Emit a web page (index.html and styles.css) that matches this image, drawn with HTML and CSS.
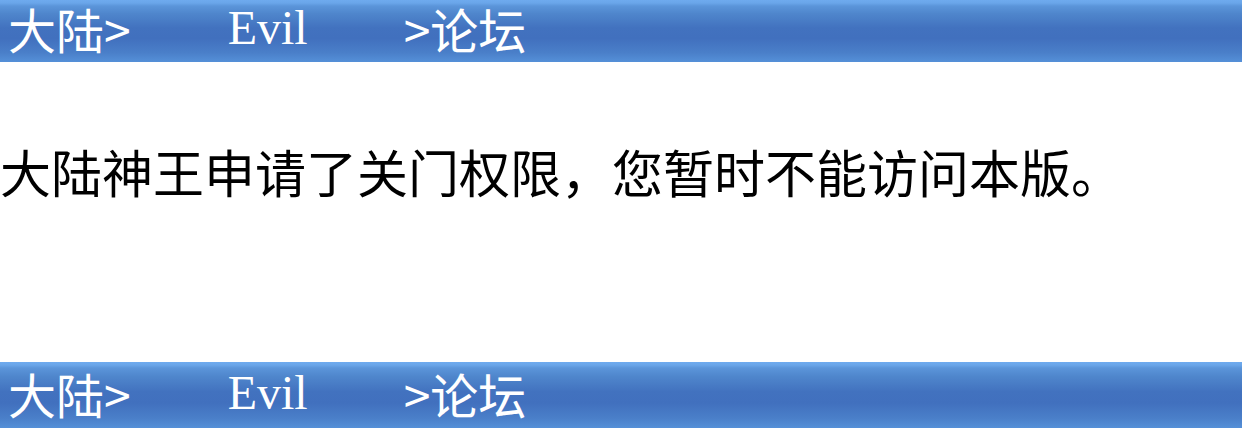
FILE: index.html
```html
<!DOCTYPE html>
<html lang="zh-CN">
<head>
<meta charset="utf-8">
<title>论坛</title>
<link rel="stylesheet" href="styles.css">
</head>
<body>
<div class="bar bar-top">
  <span class="crumb">大陆&gt;</span>
  <span class="crumb crumb-name">Evil</span>
  <span class="crumb">&gt;论坛</span>
</div>
<div class="notice">大陆神王申请了关门权限，您暂时不能访问本版。</div>
<div class="bar bar-bottom">
  <span class="crumb">大陆&gt;</span>
  <span class="crumb crumb-name">Evil</span>
  <span class="crumb">&gt;论坛</span>
</div>
</body>
</html>
```
FILE: styles.css
```css
html, body {
  margin: 0;
  padding: 0;
  background: #ffffff;
}
body {
  width: 1242px;
  height: 441px;
  overflow: hidden;
  font-family: "Noto Sans CJK SC", "Noto Sans", sans-serif;
}
.bar {
  display: flex;
  align-items: center;
  box-sizing: border-box;
  padding-left: 8px;
  color: #ffffff;
  font-size: 48px;
  line-height: 48px;
  background: linear-gradient(to bottom,
    #6eaaee 0px, #6aa6ea 3px, #5b95da 6px, #4f86cc 22%, #4272bf 45%,
    #4170be 62%, #4a7fc9 85%, #5590d8 100%);
}
.bar-top {
  height: 62px;
  padding-bottom: 6px;
}
.bar-bottom {
  height: 66px;
  padding-bottom: 4px;
  margin-top: 166px;
}
.crumb-name {
  font-family: "Liberation Serif", serif;
  margin-left: 97px;
  margin-right: 96px;
}
.notice {
  margin-top: 84px;
  height: 50px;
  font-size: 51px;
  line-height: 50px;
  color: #000000;
  white-space: nowrap;
}
```
